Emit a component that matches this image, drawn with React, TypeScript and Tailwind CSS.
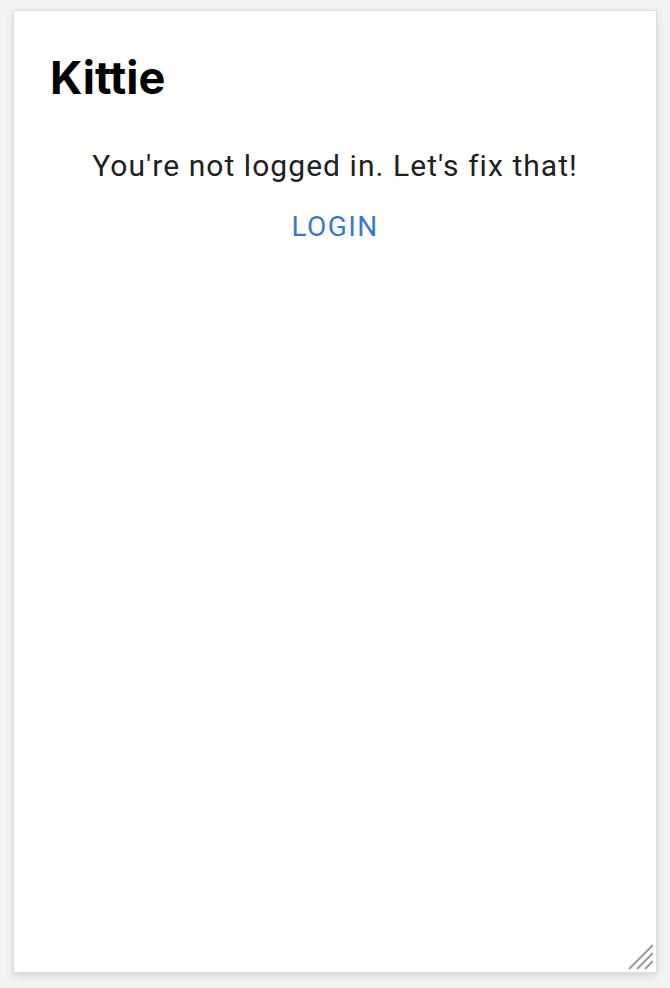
export default function App() {
  return (
    <div className="min-h-screen w-full bg-[#f3f3f3] p-[13px] pt-[10px]">
      <div className="relative flex h-[963px] flex-col border border-[#dcdcdc] bg-white shadow-[0_3px_8px_rgba(0,0,0,0.12)]">
        <div className="px-[36px] pt-[39px]">
          <h1 className="font-['Inter',sans-serif] text-[45px] font-bold leading-[56px] text-black">
            Kittie
          </h1>
        </div>

        <div className="mt-[42px] flex flex-col items-center">
          <p className="font-['Roboto',sans-serif] text-[30px] leading-[36px] tracking-[1.05px] text-[#212121]">
            You're not logged in. Let's fix that!
          </p>
          <button className="mt-[23px] px-2 py-1 font-['Roboto',sans-serif] text-[28px] font-normal uppercase leading-[32px] tracking-[0.05em] text-[#3679d4]">
            Login
          </button>
        </div>

        {/* resize grip */}
        <svg
          className="absolute right-[2px] bottom-[2px]"
          width="26"
          height="26"
          viewBox="0 0 26 26"
        >
          <path
            d="M1 25 L25 1 M9 25 L25 9 M17 25 L25 17"
            stroke="#9a9a9a"
            strokeWidth="2"
            fill="none"
          />
        </svg>
      </div>
    </div>
  );
}
